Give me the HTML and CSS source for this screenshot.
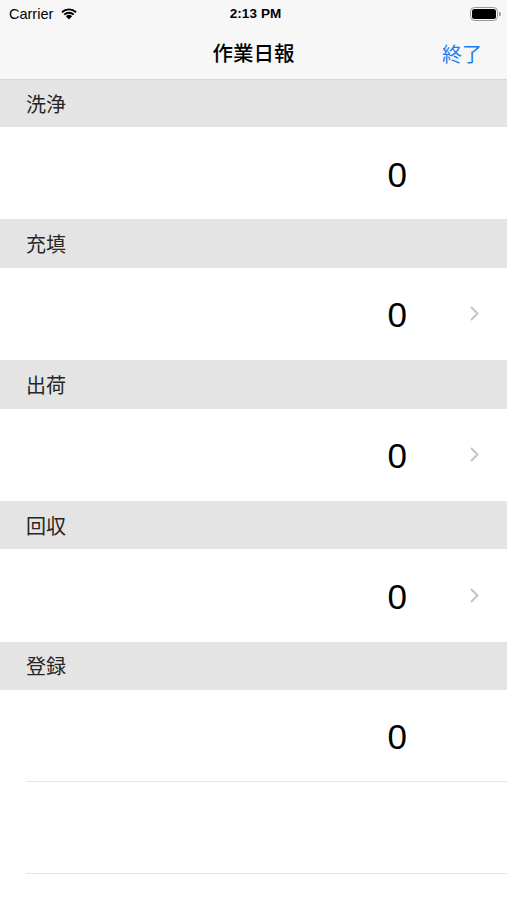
FILE: index.html
```html
<!DOCTYPE html>
<html lang="ja">
  <head>
    <meta charset="UTF-8" />
    <meta name="viewport" content="width=device-width, initial-scale=1.0" />
    <title>作業日報</title>
    <link rel="stylesheet" href="styles.css">
  </head>
  <body>
    <!-- ステータスバー + ナビゲーション -->
    <header class="top-bar">
      <div class="status">
        <div class="status-left">
          <span>Carrier</span>
          <svg class="wifi" width="18" height="13" viewBox="0 0 18 13">
            <path d="M9 12.5 L5.9 9.2 A4.6 4.6 0 0 1 12.1 9.2 Z" fill="#000" />
            <path d="M3.6 6.9 A7.9 7.9 0 0 1 14.4 6.9 L13.1 8.3 A6.1 6.1 0 0 0 4.9 8.3 Z" fill="#000" />
            <path d="M1.3 4.5 A11.2 11.2 0 0 1 16.7 4.5 L15.4 5.9 A9.3 9.3 0 0 0 2.6 5.9 Z" fill="#000" />
          </svg>
        </div>
        <div class="status-time">2:13 PM</div>
        <div class="status-right">
          <svg width="32" height="14" viewBox="0 0 32 14">
            <rect x="0.5" y="0.5" width="27" height="13" rx="4" fill="none" stroke="#9a9a9a" />
            <rect x="2" y="2" width="24" height="10" rx="2.5" fill="#000" />
            <path d="M29 4.5 Q31 5 31 7 Q31 9 29 9.5 Z" fill="#9a9a9a" />
          </svg>
        </div>
      </div>
      <nav class="nav">
        <h1 class="nav-title">作業日報</h1>
        <a class="nav-action">終了</a>
      </nav>
    </header>

    <main class="table">
      <section class="group">
        <div class="group-title">洗浄</div>
        <div class="cell">
          <span class="count">0</span>
          <span class="accessory"></span>
        </div>
      </section>

      <section class="group">
        <div class="group-title">充填</div>
        <div class="cell">
          <span class="count">0</span>
          <span class="accessory">
            <svg class="chevron" width="9" height="15" viewBox="0 0 9 15"><polyline points="1.5,1.5 7.5,7.5 1.5,13.5" /></svg>
          </span>
        </div>
      </section>

      <section class="group">
        <div class="group-title">出荷</div>
        <div class="cell">
          <span class="count">0</span>
          <span class="accessory">
            <svg class="chevron" width="9" height="15" viewBox="0 0 9 15"><polyline points="1.5,1.5 7.5,7.5 1.5,13.5" /></svg>
          </span>
        </div>
      </section>

      <section class="group">
        <div class="group-title">回収</div>
        <div class="cell">
          <span class="count">0</span>
          <span class="accessory">
            <svg class="chevron" width="9" height="15" viewBox="0 0 9 15"><polyline points="1.5,1.5 7.5,7.5 1.5,13.5" /></svg>
          </span>
        </div>
      </section>

      <section class="group">
        <div class="group-title">登録</div>
        <div class="cell cell-line">
          <span class="count">0</span>
          <span class="accessory"></span>
        </div>
        <!-- 空の行 -->
        <div class="cell cell-line"></div>
      </section>
    </main>
  </body>
</html>
```

FILE: styles.css
```css
* {
  margin: 0;
  padding: 0;
  box-sizing: border-box;
}

body {
  background: #fff;
  font-family: "Liberation Sans", "Noto Sans CJK JP", sans-serif;
  color: #000;
  width: 507px;
  height: 900px;
  overflow: hidden;
}

/* ステータスバー + ナビ */
.top-bar {
  background: #f7f7f7;
  border-bottom: 1px solid #d6d6d6;
  height: 80px;
}

.status {
  height: 27px;
  display: flex;
  align-items: center;
  justify-content: space-between;
  padding: 0 5px 0 9px;
  font-size: 14.5px;
}

.status-left {
  display: flex;
  align-items: center;
  gap: 7px;
  width: 120px;
  padding-top: 1px;
}

.wifi {
  margin-top: -2px;
}

.status-time {
  font-weight: bold;
  font-size: 13.5px;
  letter-spacing: 0.1px;
}

.status-right {
  width: 120px;
  display: flex;
  justify-content: flex-end;
}

.nav {
  height: 52px;
  display: flex;
  align-items: center;
  justify-content: center;
  position: relative;
}

.nav-title {
  font-family: "Noto Sans CJK JP", sans-serif;
  font-size: 20.5px;
  font-weight: 500;
  margin-top: -2px;
}

.nav-action {
  position: absolute;
  right: 25px;
  top: 12px;
  font-family: "Noto Sans CJK JP", sans-serif;
  font-size: 20px;
  color: #1a7ef2;
}

/* テーブル */
.group-title {
  background: #e4e4e4;
  height: 48.5px;
  display: flex;
  align-items: center;
  padding-left: 26px;
  font-family: "Noto Sans CJK JP", sans-serif;
  font-size: 20px;
  color: #262626;
}

.group:first-child .group-title {
  height: 47px;
}

.cell {
  height: 92.3px;
  display: flex;
  align-items: center;
  justify-content: flex-end;
  padding-right: 28px;
}

.cell-line {
  height: 92px;
  margin-left: 26px;
  border-bottom: 1px solid #e6e6e6;
}

.count {
  font-size: 35px;
  line-height: 1;
  padding-top: 2px;
}

.accessory {
  width: 72px;
  display: flex;
  justify-content: flex-end;
}

.chevron polyline {
  fill: none;
  stroke: #c4c4c8;
  stroke-width: 2;
  stroke-linecap: round;
  stroke-linejoin: round;
}
```
